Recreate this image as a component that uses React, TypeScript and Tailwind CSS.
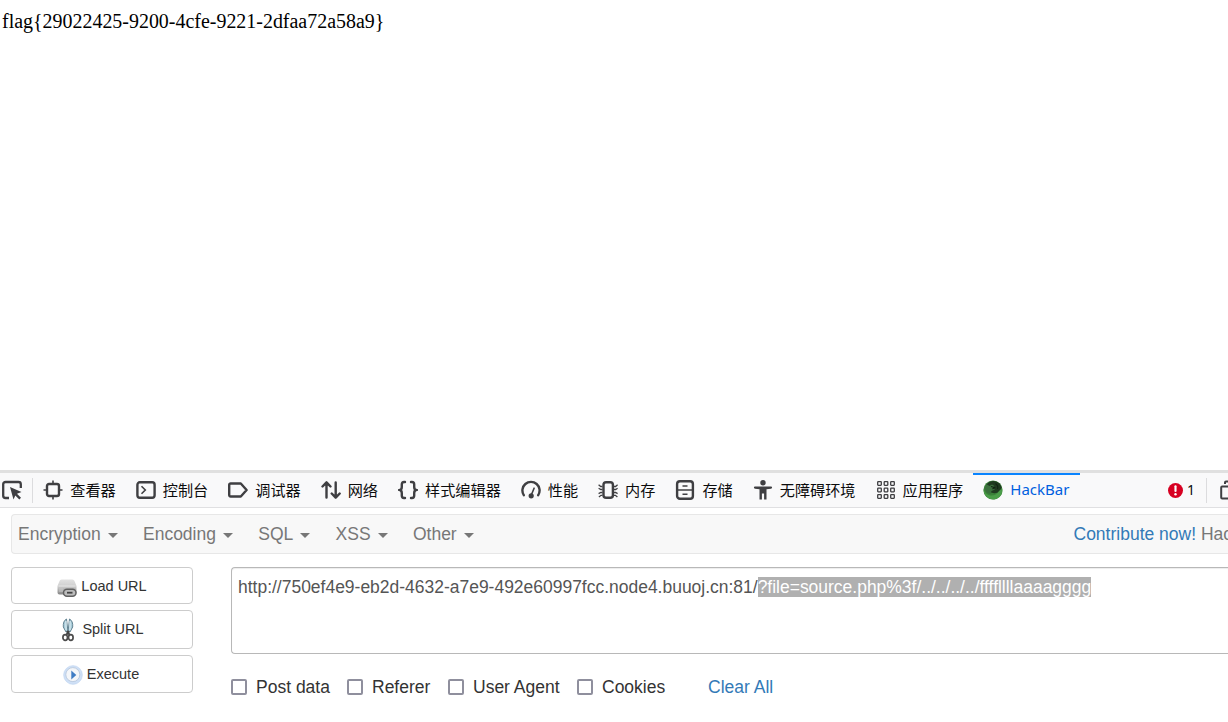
import type { ReactNode } from 'react'

const Icon = ({ children }: { children: ReactNode }) => (
  <svg className="w-5 h-5 shrink-0" viewBox="0 0 20 20" fill="none" stroke="#3f3f42" strokeWidth="2.4">{children}</svg>
)

const tabs = [
  {
    name: '查看器',
    icon: <Icon><rect x="4" y="4" width="12" height="12" rx="2" /><path strokeWidth="1.6" d="M10 0.5v3M10 16.5v3M0.5 10h3M16.5 10h3" /></Icon>,
  },
  {
    name: '控制台',
    icon: <Icon><rect x="1.4" y="2.3" width="17.2" height="15.4" rx="2.4" /><path strokeWidth="1.6" d="M5.5 6.2l3.8 3.8-3.8 3.8" /></Icon>,
  },
  {
    name: '调试器',
    icon: <Icon><path strokeLinejoin="round" d="M2.6 3.5h10.2l5.8 6.5-5.8 6.5H2.6a1.4 1.4 0 0 1-1.4-1.4V4.9a1.4 1.4 0 0 1 1.4-1.4z" /></Icon>,
  },
  {
    name: '网络',
    icon: <Icon><path strokeLinecap="round" strokeLinejoin="round" d="M5.5 17.5V2.5M1.5 6.5l4-4.2 4 4.2M14.7 2.5v15M10.7 13.5l4 4.2 4-4.2" /></Icon>,
  },
  {
    name: '样式编辑器',
    icon: <Icon><path strokeLinecap="round" d="M7 2H6Q3.8 2 3.8 4.5v2.3Q3.8 9.5 2 10q1.8.5 1.8 3.2v2.3Q3.8 18 6 18h1M13 2h1q2.2 0 2.2 2.5v2.3q0 2.7 1.8 3.2-1.8.5-1.8 3.2v2.3Q16.2 18 14 18h-1" /></Icon>,
  },
  {
    name: '性能',
    icon: <Icon><path strokeLinecap="round" d="M2.8 15.2A8.6 8.6 0 1 1 17.2 15.2" /><path strokeWidth="1.6" strokeLinecap="round" d="M10.3 15l2.8-6.8" /><circle cx="10.2" cy="15.8" r="2.6" fill="#3f3f42" stroke="none" /></Icon>,
  },
  {
    name: '内存',
    icon: <Icon><rect x="5.5" y="2.2" width="9.4" height="15.6" rx="2.6" /><path strokeWidth="1.3" d="M4.5 6.5H2.7L.6 4.7M4.5 9.5H2.8L.6 8.3M4.5 12.5H2.8L.6 13.6M4.5 15.3H3L.9 17M15.9 6.5h1.7l2-1.8M15.9 9.5h1.7l2-1.2M15.9 12.5h1.7l2 1.1M15.9 15.3h1.5l2 1.7" /></Icon>,
  },
  {
    name: '存储',
    icon: <Icon><rect x="2.1" y="1.3" width="15.8" height="17.4" rx="2.8" /><path strokeWidth="1.4" d="M2 10h16M7.5 6h5M7.5 14.3h5" /></Icon>,
  },
  {
    name: '无障碍环境',
    icon: <Icon><g fill="#3f3f42" stroke="none"><circle cx="10" cy="2.8" r="2.7" /><path d="M2 6.5h16a1 1 0 0 1 0 2.2l-4.5.5v10.3h-2.4v-6H8.9v6H6.5V9.2L2 8.7a1 1 0 0 1 0-2.2z" /></g></Icon>,
  },
  {
    name: '应用程序',
    icon: <Icon>{[1.7, 8.2, 14.7].map(y => [1.7, 8.2, 14.7].map(x => <rect key={`${x}-${y}`} x={x} y={y} width="3.6" height="3.6" rx="0.5" strokeWidth="1.3" />))}</Icon>,
  },
]

const menus = ['Encryption', 'Encoding', 'SQL', 'XSS', 'Other']

const options = [
  { label: 'Post data', width: 'w-[116px]' },
  { label: 'Referer', width: 'w-[101px]' },
  { label: 'User Agent', width: 'w-[129px]' },
  { label: 'Cookies', width: 'w-[131px]' },
]

function HackBarIcon() {
  return (
    <svg className="w-5 h-5 shrink-0" viewBox="0 0 20 20">
      <circle cx="10" cy="10" r="9.6" fill="#3a8239" />
      <path d="M3.5 4.5Q7 .6 12 1.2q5 1 6.5 6-1 5-5.500 5.800-5 .8-7-2.500z" fill="#1f3a20" />
      <path d="M1.500 8L4 4.500 6.500 6 9 4.500l2.500 1.500-1.500 2 2 1.500-3.500 1.500-1 3-4-1.500z" fill="#3b6f3d" />
      <path d="M.8 9q.7 5 6.200 6.500 6 .7 9-4.500l2.500-2 .8 3q-1.500 6-8 7.500-8 0-10.500-7.500z" fill="#4a9c48" />
      <path d="M12.500 3.500q3 2 2 5.500M8 6.500l3.500 1-2 1.500" fill="none" stroke="#122513" strokeWidth="1.100" />
    </svg>
  )
}

function LoadIcon() {
  return (
    <svg className="w-5 h-5 shrink-0" viewBox="0 0 20 20">
      <defs>
        <linearGradient id="disk" x2="0" y2="1">
          <stop stopColor="#e2e2e2" />
          <stop offset="0.45" stopColor="#cfcfcf" />
          <stop offset="1" stopColor="#858585" />
        </linearGradient>
      </defs>
      <path d="M4.500 1.500h11Q17 1.500 17.500 3L19.500 8v6.500q0 2-2 2h-15q-2 0-2-2V8l2-5Q3 1.500 4.500 1.500z" fill="url(#disk)" />
      <path d="M1.500 8h17" stroke="#eee" strokeWidth="0.8" />
      <path d="M2 11h4M2 13h4" stroke="#c9c9c9" />
      <rect x="6.500" y="11.200" width="12.500" height="7" rx="3.500" fill="#bcbcbc" stroke="#606060" strokeWidth="1.500" />
      <path d="M10 14.700h5.500" stroke="#444" strokeWidth="1.800" />
    </svg>
  )
}

function SplitIcon() {
  return (
    <svg className="w-3 h-6 shrink-0" viewBox="0 0 12 24" fill="none">
      <path d="M4 14L1.300 9Q.8 3 4.500 1L6 14zM8 14l2.700-5q.5-6-3.200-8L6 14z" fill="#a9ccd9" stroke="#648493" />
      <path d="M4 3v9M8 3v9" stroke="#e5f3f8" />
      <path d="M5 13l3 4.500M7 13l-3 4.500" stroke="#444" strokeWidth="2" />
      <ellipse cx="3.200" cy="19.500" rx="2.300" ry="2.900" stroke="#4c4c4c" strokeWidth="1.700" />
      <ellipse cx="8.800" cy="19.500" rx="2.300" ry="2.900" stroke="#4c4c4c" strokeWidth="1.700" />
    </svg>
  )
}

function ExecuteIcon() {
  return (
    <svg className="w-5 h-5 shrink-0" viewBox="0 0 20 20">
      <circle cx="10" cy="10" r="9.300" fill="#cfe0f6" stroke="#c3d7f1" strokeWidth="0.8" />
      <circle cx="9.800" cy="9.600" r="7" fill="#f4f6f9" stroke="#aebfd6" strokeWidth="0.7" />
      <path d="M8.300 5.500l5 4.500-5 4.500z" fill="#3f7cc4" />
    </svg>
  )
}

function Toolbar() {
  return (
    <div className="flex h-[38px] border-t-[3px] border-b border-t-[#e0e0e0] border-b-[#e0e0e2] bg-[#f9f9fa] text-[#0c0c0d]">
      <div className="w-[33px] shrink-0 pl-[2px] flex items-center">
        <svg className="w-[21px] h-5" viewBox="0 0 21 20" fill="none">
          <path d="M7 18H3.500A2.300 2.300 0 0 1 1.200 15.700V4.300A2.300 2.300 0 0 1 3.500 2H16.500A2.300 2.300 0 0 1 18.800 4.300V8" stroke="#3f3f42" strokeWidth="2.300" />
          <path d="M8 7l11.500 5-4.500 1.800 4 4-1.700 1.700-4-4-1.800 4z" fill="#3f3f42" />
        </svg>
        <div className="ml-auto w-px h-[25px] bg-[#dcdcde]" />
      </div>
      {tabs.map(tab => (
        <div key={tab.name} className="flex items-center gap-[7px] pl-[10.3px] pr-[9.7px] shrink-0 whitespace-nowrap font-['Noto_Sans_CJK_SC',sans-serif] text-[15.16px] leading-5">
          {tab.icon}
          <span className="pb-[3px]">{tab.name}</span>
        </div>
      ))}
      <div className="relative flex items-center gap-[7px] w-[107px] px-[10px] shrink-0 text-[#0060df]">
        <div className="absolute left-0 right-0 top-0 h-[2px] bg-[#0a84ff]" />
        <HackBarIcon />
        <span className="pb-[2px] pl-[0.5px] font-['Noto_Sans',sans-serif] text-[15px] leading-5">HackBar</span>
      </div>
      <div className="ml-auto flex items-center shrink-0">
        <svg className="w-[15px] h-[15px]" viewBox="0 0 16 16">
          <circle cx="8" cy="8" r="8" fill="#d70022" />
          <path d="M8 3.500v5" stroke="#fff" strokeWidth="2.300" strokeLinecap="round" />
          <circle cx="8" cy="12" r="1.300" fill="#fff" />
        </svg>
        <span className="w-[23px] pl-[4px] pb-[2px] font-['Noto_Sans',sans-serif] text-[14px]">1</span>
        <div className="w-px h-[25px] bg-[#dcdcde]" />
        <svg className="ml-[13px] w-[8px] h-5" viewBox="0 0 8 20" fill="none" stroke="#3f3f42" strokeWidth="2">
          <rect x="1.200" y="6.500" width="13" height="12" rx="1" />
          <path d="M5 4V2.500Q5 1.500 6 1.500h3" />
        </svg>
      </div>
    </div>
  )
}

function Menu() {
  return (
    <div className="flex items-center ml-[11px] mt-[6px] h-10 pl-[6px] border border-r-0 border-[#e7e7e7] rounded-l-[4px] bg-[#f8f8f8] text-[17.5px] text-[#777] whitespace-nowrap">
      {menus.map(menu => (
        <div key={menu} className="flex items-center mr-[25.3px] shrink-0">
          <span>{menu}</span>
          <svg className="ml-[7px] mt-[3px] w-[10px] h-[5px]" viewBox="0 0 10 5"><path d="M0 0h10L5 5z" fill="#777" /></svg>
        </div>
      ))}
      <div className="ml-auto w-[154.5px] shrink-0 overflow-hidden">
        <span className="text-[#337ab7]">Contribute now!</span> HackBar
      </div>
    </div>
  )
}

const button = "flex items-center justify-center w-[182px] border border-[#ccc] rounded-[4px] bg-white text-[14.5px] text-[#333]"

function App() {
  return (
    <div className="h-[722px] w-[1228px] overflow-hidden bg-white font-['Liberation_Sans',Arial,sans-serif]">
      <div className="h-[470px] pl-[2px] pt-[10px] font-['Liberation_Serif',serif] text-[19.95px] leading-[23px] text-black">
        flag&#123;29022425-9200-4cfe-9221-2dfaa72a58a9&#125;
      </div>
      <Toolbar />
      <Menu />
      <div className="flex ml-[11px] mt-[13px]">
        <div className="flex flex-col gap-[6px] w-[220px] shrink-0">
          <button className={`${button} h-[37px] gap-[4px]`}><span className="pt-[4px]"><LoadIcon /></span><span className="pt-[2px]">Load URL</span></button>
          <button className={`${button} h-[39px] gap-[8px] pl-[2px]`}><span className="pt-[1px]"><SplitIcon /></span>Split URL</button>
          <button className={`${button} h-[38px] gap-[4px] pr-[2px]`}><span className="pt-[1px]"><ExecuteIcon /></span><span className="pt-[1px]">Execute</span></button>
        </div>
        <div className="flex-1 min-w-0">
          <div className="h-[87px] pl-[6px] pt-[9px] border border-r-0 border-[#b8b8b8] rounded-l-[4px] shadow-[inset_0_1px_1px_rgba(0,0,0,0.075)] text-[17.48px] leading-5 text-[#555] whitespace-nowrap">
            http://750ef4e9-eb2d-4632-a7e9-492e60997fcc.node4.buuoj.cn:81/<span className="inline-block h-5 bg-[#b0b0b0] text-white">?file=source.php%3f/../../../../ffffllllaaaagggg</span>
          </div>
          <div className="flex items-center mt-[21px] h-6 text-[17.5px] text-[#333] whitespace-nowrap">
            {options.map(option => (
              <label key={option.label} className={`${option.width} flex items-center gap-[9px] shrink-0`}>
                <input type="checkbox" className="appearance-none w-4 h-4 border-2 border-[#8f8f9d] rounded-[2px] bg-white" />
                {option.label}
              </label>
            ))}
            <a className="text-[#337ab7]">Clear All</a>
          </div>
        </div>
      </div>
    </div>
  )
}

export default App
